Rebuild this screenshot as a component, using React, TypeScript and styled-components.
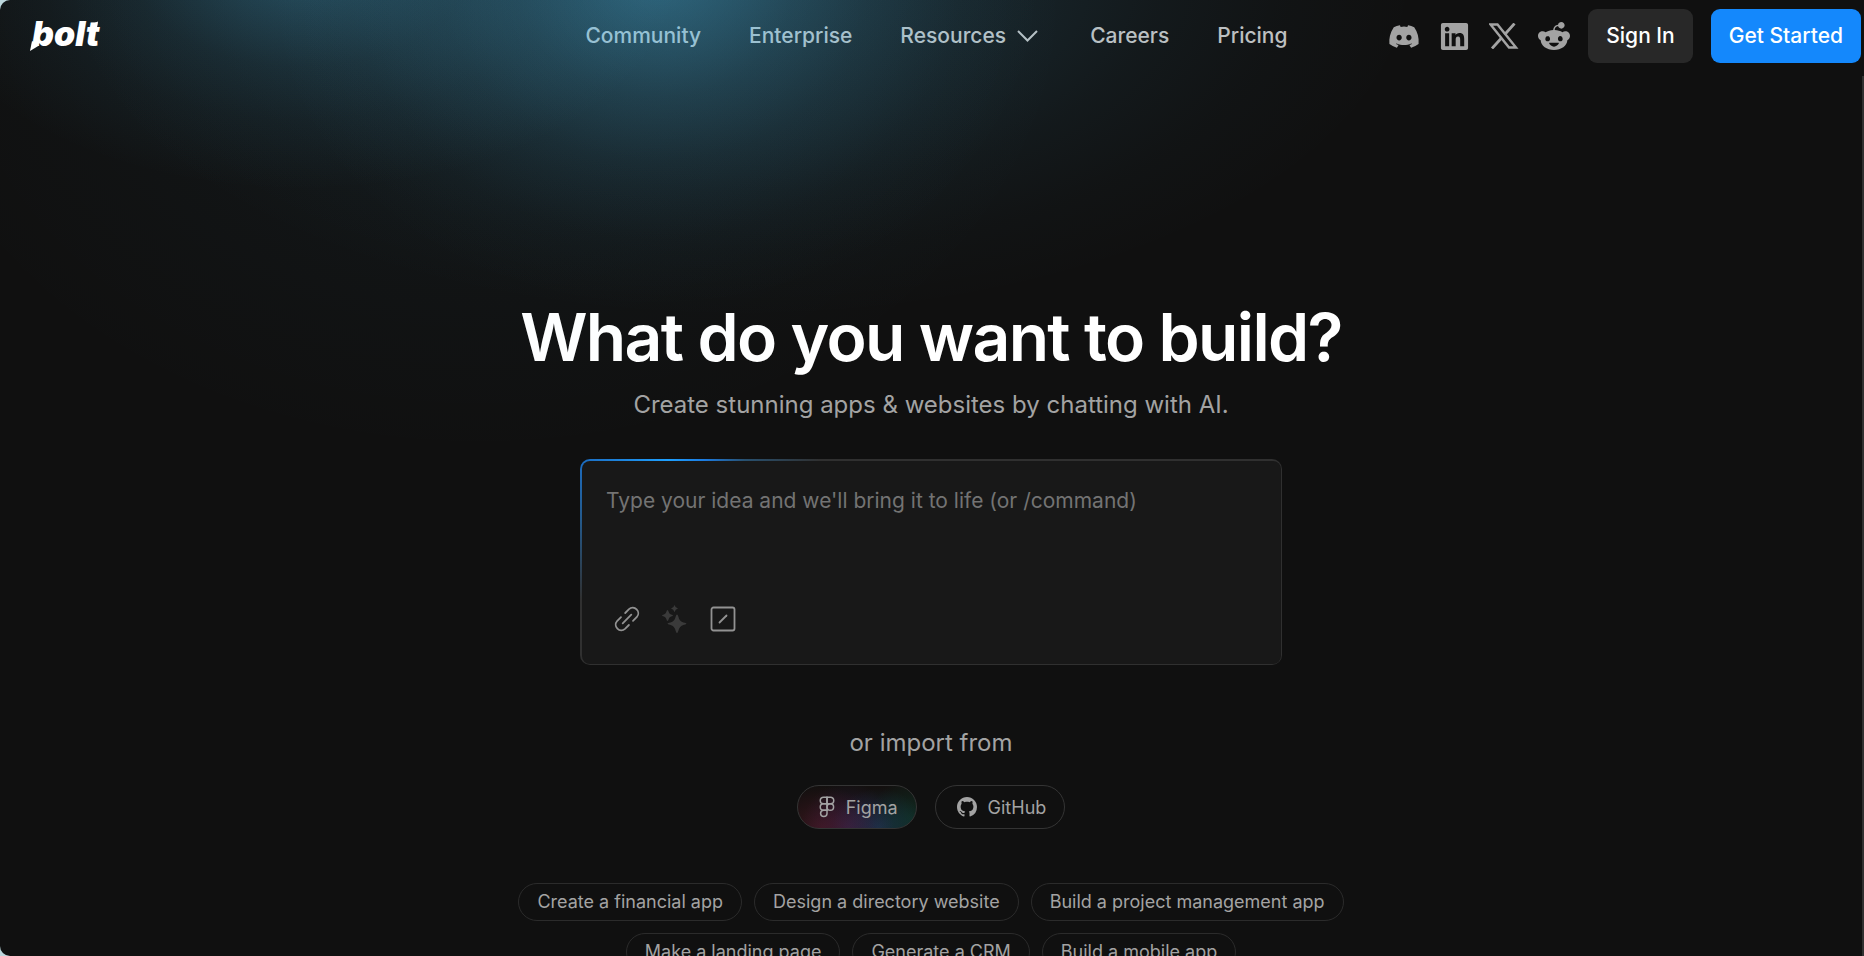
import React from "react";
import styled, { createGlobalStyle } from "styled-components";
import { FaDiscord, FaLinkedin, FaRedditAlien } from "react-icons/fa6";

const GlobalStyle = createGlobalStyle`
  *, *::before, *::after { box-sizing: border-box; }
  html, body, #root { height: 100%; }
  body {
    margin: 0;
    background: #bcd6dc;
    font-family: Inter, "Liberation Sans", sans-serif;
    color: #fff;
  }
  button, textarea { font: inherit; }
`;

const Shell = styled.div`
  position: relative;
  height: 100%;
  overflow: hidden;
  border-radius: 10px 0 0 10px;
  background: #101010;
`;

const Scroller = styled.div`
  height: 100%;
  overflow-y: auto;
  scrollbar-width: none;
`;

/* Tinted light that falls across the top of the page, over the menu. */
const Glow = styled.div`
  position: absolute;
  inset: 0;
  z-index: 1;
  pointer-events: none;
  background:
    radial-gradient(390px 330px at 655px -20px,
      rgba(79, 195, 245, 0.34) 0%, rgba(79, 195, 245, 0.24) 18%,
      rgba(79, 195, 245, 0.14) 36%, rgba(79, 195, 245, 0.07) 55%,
      rgba(79, 195, 245, 0.02) 78%, rgba(79, 195, 245, 0) 100%),
    radial-gradient(680px 340px at 740px -20px,
      rgba(79, 195, 245, 0.2) 0%, rgba(79, 195, 245, 0.15) 22%,
      rgba(79, 195, 245, 0.1) 42%, rgba(79, 195, 245, 0.05) 62%,
      rgba(79, 195, 245, 0.02) 80%, rgba(79, 195, 245, 0) 100%),
    radial-gradient(380px 220px at 300px -30px,
      rgba(79, 195, 245, 0.29) 0%, rgba(79, 195, 245, 0.2) 22%,
      rgba(79, 195, 245, 0.11) 44%, rgba(79, 195, 245, 0.05) 68%,
      rgba(79, 195, 245, 0) 100%),
    radial-gradient(600px 460px at 480px 0,
      rgba(79, 195, 245, 0.05) 0%, rgba(79, 195, 245, 0) 100%);
`;

const Header = styled.header`
  display: grid;
  grid-template-columns: 1fr auto 1fr;
  align-items: center;
  height: 76px;
  padding: 0 3px 4px 12px;
`;

const LogoLink = styled.a`
  position: relative;
  z-index: 2;
  justify-self: start;
  margin-left: 18px;
  line-height: 0;
`;

const Nav = styled.nav`
  display: flex;
  align-items: center;
  gap: 48px;
`;

const NavLink = styled.a`
  color: #c0c0c0;
  font-size: 21px;
  font-weight: 500;
  line-height: 28px;
  text-decoration: none;
`;

const NavButton = styled.button`
  display: flex;
  align-items: center;
  gap: 8px;
  padding: 0;
  border: 0;
  background: none;
  color: #c0c0c0;
  font-size: 21px;
  font-weight: 500;
  line-height: 28px;
`;

const Actions = styled.div`
  display: flex;
  align-items: center;
  justify-content: flex-end;
  gap: 18px;
`;

const Social = styled.div`
  display: flex;
  align-items: center;
  gap: 18px;
`;

const SocialLink = styled.a`
  display: flex;
  align-items: center;
  justify-content: center;
  width: 32px;
  height: 32px;
  color: #a3a3a3;
`;

const HeaderButton = styled.button<{ $primary?: boolean }>`
  height: 54px;
  padding: 0 18px;
  border: 0;
  border-radius: 9px;
  background: ${(p) => (p.$primary ? "#1488fc" : "#282828")};
  color: #fff;
  font-size: 21px;
  font-weight: 500;
  line-height: 28px;
  white-space: nowrap;
`;

const Main = styled.main`
  display: flex;
  flex-direction: column;
  align-items: center;
  padding-top: 221px;
  border-right: 2px solid #303030;
`;

const Title = styled.h1`
  margin: 0;
  font-size: 66px;
  font-weight: 600;
  line-height: 80px;
  letter-spacing: -0.025em;
`;

const Subtitle = styled.p`
  margin: 10px 0 0;
  color: #a3a3a3;
  font-size: 24px;
  line-height: 36px;
`;

const Prompt = styled.form`
  display: flex;
  flex-direction: column;
  width: 702px;
  max-width: 100%;
  height: 206px;
  margin-top: 36px;
  padding: 2px 1px 1px 2px;
  border-radius: 10px;
  background:
    linear-gradient(90deg, #1c6cc0 0, #1ea0ff 88px, #1c7be0 125px, #28506f 165px, rgba(48, 48, 48, 0) 240px)
      0 0 / 100% 9px no-repeat,
    linear-gradient(180deg, #1c6cc0 0, #245a8c 60px, rgba(48, 48, 48, 0) 140px)
      0 0 / 9px 100% no-repeat,
    #303030;
`;

const PromptBody = styled.div`
  display: flex;
  flex: 1;
  flex-direction: column;
  border-radius: 8px;
  background: #181818;
`;

const PromptInput = styled.textarea`
  flex: 1;
  padding: 25px 24px 0;
  border: 0;
  outline: 0;
  resize: none;
  background: none;
  color: #fff;
  font-size: 21px;
  line-height: 30px;
  &::placeholder { color: #737373; opacity: 1; }
`;

const Tools = styled.div`
  display: flex;
  gap: 16px;
  padding: 0 29px 29px;
`;

const ToolButton = styled.button<{ $dim?: boolean }>`
  display: flex;
  align-items: center;
  justify-content: center;
  width: 32px;
  height: 32px;
  padding: 0;
  border: 0;
  background: none;
  color: ${(p) => (p.$dim ? "#3a3a3a" : "#929292")};
`;

const ImportLabel = styled.p`
  margin: 60px 0 0;
  color: #a3a3a3;
  font-size: 24px;
  line-height: 36px;
`;

const ImportRow = styled.div`
  display: flex;
  gap: 18px;
  margin-top: 24px;
`;

const ImportButton = styled.button<{ $figma?: boolean }>`
  display: flex;
  align-items: center;
  gap: 11px;
  height: 44px;
  padding: 0 18px 0 21px;
  border: 1px solid #343434;
  border-radius: 22px;
  color: #a3a3a3;
  font-size: 18px;
  background: ${(p) =>
    p.$figma
      ? `radial-gradient(54px 42px at 20% 100%, rgba(110, 30, 50, 0.42), rgba(110, 30, 50, 0)),
         radial-gradient(46px 46px at 42% 100%, rgba(70, 40, 110, 0.42), rgba(70, 40, 110, 0)),
         radial-gradient(46px 40px at 68% 100%, rgba(30, 75, 110, 0.5), rgba(30, 75, 110, 0)),
         radial-gradient(40px 44px at 96% 80%, rgba(10, 85, 60, 0.4), rgba(10, 85, 60, 0)), #13100f`
      : "transparent"};
`;

const Suggestions = styled.div`
  display: flex;
  flex-wrap: wrap;
  justify-content: center;
  gap: 12px;
  max-width: 880px;
  margin-top: 54px;
  padding-bottom: 60px;
`;

const Chip = styled.button`
  height: 38px;
  padding: 0 18px;
  border: 1px solid #2b2b2b;
  border-radius: 19px;
  background: none;
  color: #a3a3a3;
  font-size: 18px;
  line-height: 24px;
  white-space: nowrap;
`;

const LogoSvg = styled.svg`
  overflow: visible;
`;

const suggestions = [
  "Create a financial app",
  "Design a directory website",
  "Build a project management app",
  "Make a landing page",
  "Generate a CRM",
  "Build a mobile app",
];

const Logo = () => (
  <LogoSvg width="76" height="34" viewBox="0 0 76 34" fill="#fff" aria-hidden="true">
    <text x="2" y="27" fontFamily="Inter, sans-serif" fontSize="34" fontWeight="900" fontStyle="italic">
      bolt
    </text>
    <path d="M2 22 L0 32 L9 26.5 Z" />
    <path d="M61 5.5 L68 2.5 L66.500 11 L60 11 Z" />
  </LogoSvg>
);

const Chevron = () => (
  <svg width="28" height="14" viewBox="0 0 28 14" fill="none" stroke="currentColor" strokeWidth="2" aria-hidden="true">
    <path d="M4 2 L13.5 11.5 L23 2" />
  </svg>
);

const XIcon = () => (
  <svg width="30" height="26" viewBox="0 0 30 26" aria-hidden="true">
    <path d="M1.5 1.500 H8.500 L27 24.500 H20 Z" fill="none" stroke="currentColor" strokeWidth="2.400" />
    <path d="M25.500 0.500 L15.500 11.800 M12.700 14.800 L3 25.500" fill="none" stroke="currentColor" strokeWidth="2.800" />
  </svg>
);

const LinkIcon = () => (
  <svg width="28" height="28" viewBox="0 0 28 28" fill="none" stroke="currentColor" strokeWidth="1.8" strokeLinecap="round" aria-hidden="true">
    <path d="M9.7 18.3 L18.3 9.7" />
    <path d="M12.2 8 L16 4.1 A5.6 5.6 0 0 1 23.9 12 L20 15.9" />
    <path d="M8 12.1 L4.1 16 A5.6 5.6 0 0 0 12 23.9 L15.9 20" />
  </svg>
);

const StarsIcon = () => (
  <svg width="28" height="28" viewBox="0 0 28 28" fill="currentColor" aria-hidden="true">
    <path d="M16 9.5 Q16.8 9.5 17.3 11.5 Q18.4 16.5 22.5 17.5 Q25.5 18.1 25.5 18.7 Q25.5 19.3 22.5 19.9 Q18.4 21 17.3 26 Q16.8 28 16 28 Q15.2 28 14.7 26 Q13.6 21 9.5 19.9 Q6.5 19.3 6.5 18.7 Q6.5 18.1 9.5 17.5 Q13.6 16.5 14.7 11.5 Q15.2 9.5 16 9.5 Z" />
    <path d="M6.5 5 Q7.2 5 7.6 6.8 Q8.2 9 10 9.5 Q12 9.9 12 10.5 Q12 11.1 10 11.5 Q8.2 12 7.6 14.2 Q7.2 16 6.5 16 Q5.8 16 5.4 14.2 Q4.8 12 3 11.5 Q1 11.1 1 10.5 Q1 9.9 3 9.5 Q4.8 9 5.4 6.8 Q5.8 5 6.5 5 Z" />
    <path d="M13.5 0 Q14.2 2.9 17 3.6 Q14.2 4.3 13.5 7.2 Q12.8 4.3 10 3.6 Q12.8 2.9 13.5 0 Z" />
  </svg>
);

const SlashIcon = () => (
  <svg width="28" height="28" viewBox="0 0 28 28" fill="none" stroke="currentColor" strokeWidth="1.8" strokeLinecap="round" aria-hidden="true">
    <rect x="2.5" y="2.5" width="23" height="23" rx="2" />
    <path d="M10.5 17.5 L17.5 10.5" />
  </svg>
);

const FigmaIcon = () => (
  <svg width="16" height="22" viewBox="0 0 16 22" fill="none" stroke="currentColor" strokeWidth="1.5" aria-hidden="true">
    <path d="M8 1.2 H4.5 A3.2 3.2 0 0 0 4.5 7.7 H8 Z" />
    <path d="M8 1.2 H11.5 A3.2 3.2 0 0 1 11.5 7.7 H8 Z" />
    <path d="M8 7.7 H4.5 A3.2 3.2 0 0 0 4.5 14.2 H8 Z" />
    <circle cx="11.3" cy="11" r="3.3" />
    <path d="M8 14.2 H4.5 A3.2 3.2 0 1 0 8 17.5 Z" />
  </svg>
);

const GitHubIcon = () => (
  <svg width="20" height="20" viewBox="0 0 16 16" fill="currentColor" aria-hidden="true">
    <path d="M8 0C3.580 0 0 3.580 0 8c0 3.540 2.290 6.530 5.470 7.590.4.070.55-.17.55-.38 0-.19-.01-.82-.01-1.490-2.010.37-2.530-.49-2.690-.94-.09-.23-.48-.94-.82-1.130-.28-.15-.68-.52-.01-.53.63-.01 1.080.58 1.230.82.72 1.210 1.870.87 2.330.66.07-.52.28-.87.51-1.070-1.780-.2-3.640-.89-3.640-3.950 0-.87.31-1.590.82-2.150-.08-.2-.36-1.020.08-2.120 0 0 .67-.21 2.200.82.64-.18 1.320-.27 2-.27s1.360.09 2 .27c1.530-1.040 2.200-.82 2.200-.82.44 1.100.16 1.920.08 2.120.51.56.82 1.270.82 2.150 0 3.070-1.870 3.750-3.650 3.950.29.25.54.73.54 1.480 0 1.070-.01 1.930-.01 2.200 0 .21.15.46.55.38A8.010 8.010 0 0 0 16 8c0-4.420-3.580-8-8-8Z" />
  </svg>
);

export default function App() {
  return (
    <>
      <GlobalStyle />
      <Shell>
        <Scroller>
          <Header>
            <LogoLink href="#" aria-label="bolt">
              <Logo />
            </LogoLink>
            <Nav>
              <NavLink href="#community">Community</NavLink>
              <NavLink href="#enterprise">Enterprise</NavLink>
              <NavButton type="button">
                Resources
                <Chevron />
              </NavButton>
              <NavLink href="#careers">Careers</NavLink>
              <NavLink href="#pricing">Pricing</NavLink>
            </Nav>
            <Actions>
              <Social>
                <SocialLink href="#discord" aria-label="Discord"><FaDiscord size={33} /></SocialLink>
                <SocialLink href="#linkedin" aria-label="LinkedIn"><FaLinkedin size={31} /></SocialLink>
                <SocialLink href="#x" aria-label="X"><XIcon /></SocialLink>
                <SocialLink href="#reddit" aria-label="Reddit"><FaRedditAlien size={32} /></SocialLink>
              </Social>
              <HeaderButton type="button">Sign In</HeaderButton>
              <HeaderButton type="button" $primary>Get Started</HeaderButton>
            </Actions>
          </Header>
          <Main>
            <Title>What do you want to build?</Title>
            <Subtitle>Create stunning apps &amp; websites by chatting with AI.</Subtitle>
            <Prompt>
              <PromptBody>
                <PromptInput aria-label="Your idea" placeholder="Type your idea and we'll bring it to life (or /command)" />
                <Tools>
                  <ToolButton type="button" aria-label="Attach a link"><LinkIcon /></ToolButton>
                  <ToolButton type="button" aria-label="Enhance prompt" $dim><StarsIcon /></ToolButton>
                  <ToolButton type="button" aria-label="Commands"><SlashIcon /></ToolButton>
                </Tools>
              </PromptBody>
            </Prompt>
            <ImportLabel>or import from</ImportLabel>
            <ImportRow>
              <ImportButton type="button" $figma><FigmaIcon />Figma</ImportButton>
              <ImportButton type="button"><GitHubIcon />GitHub</ImportButton>
            </ImportRow>
            <Suggestions>
              {suggestions.map((s) => (
                <Chip key={s} type="button">{s}</Chip>
              ))}
            </Suggestions>
          </Main>
        </Scroller>
        <Glow />
      </Shell>
    </>
  );
}
